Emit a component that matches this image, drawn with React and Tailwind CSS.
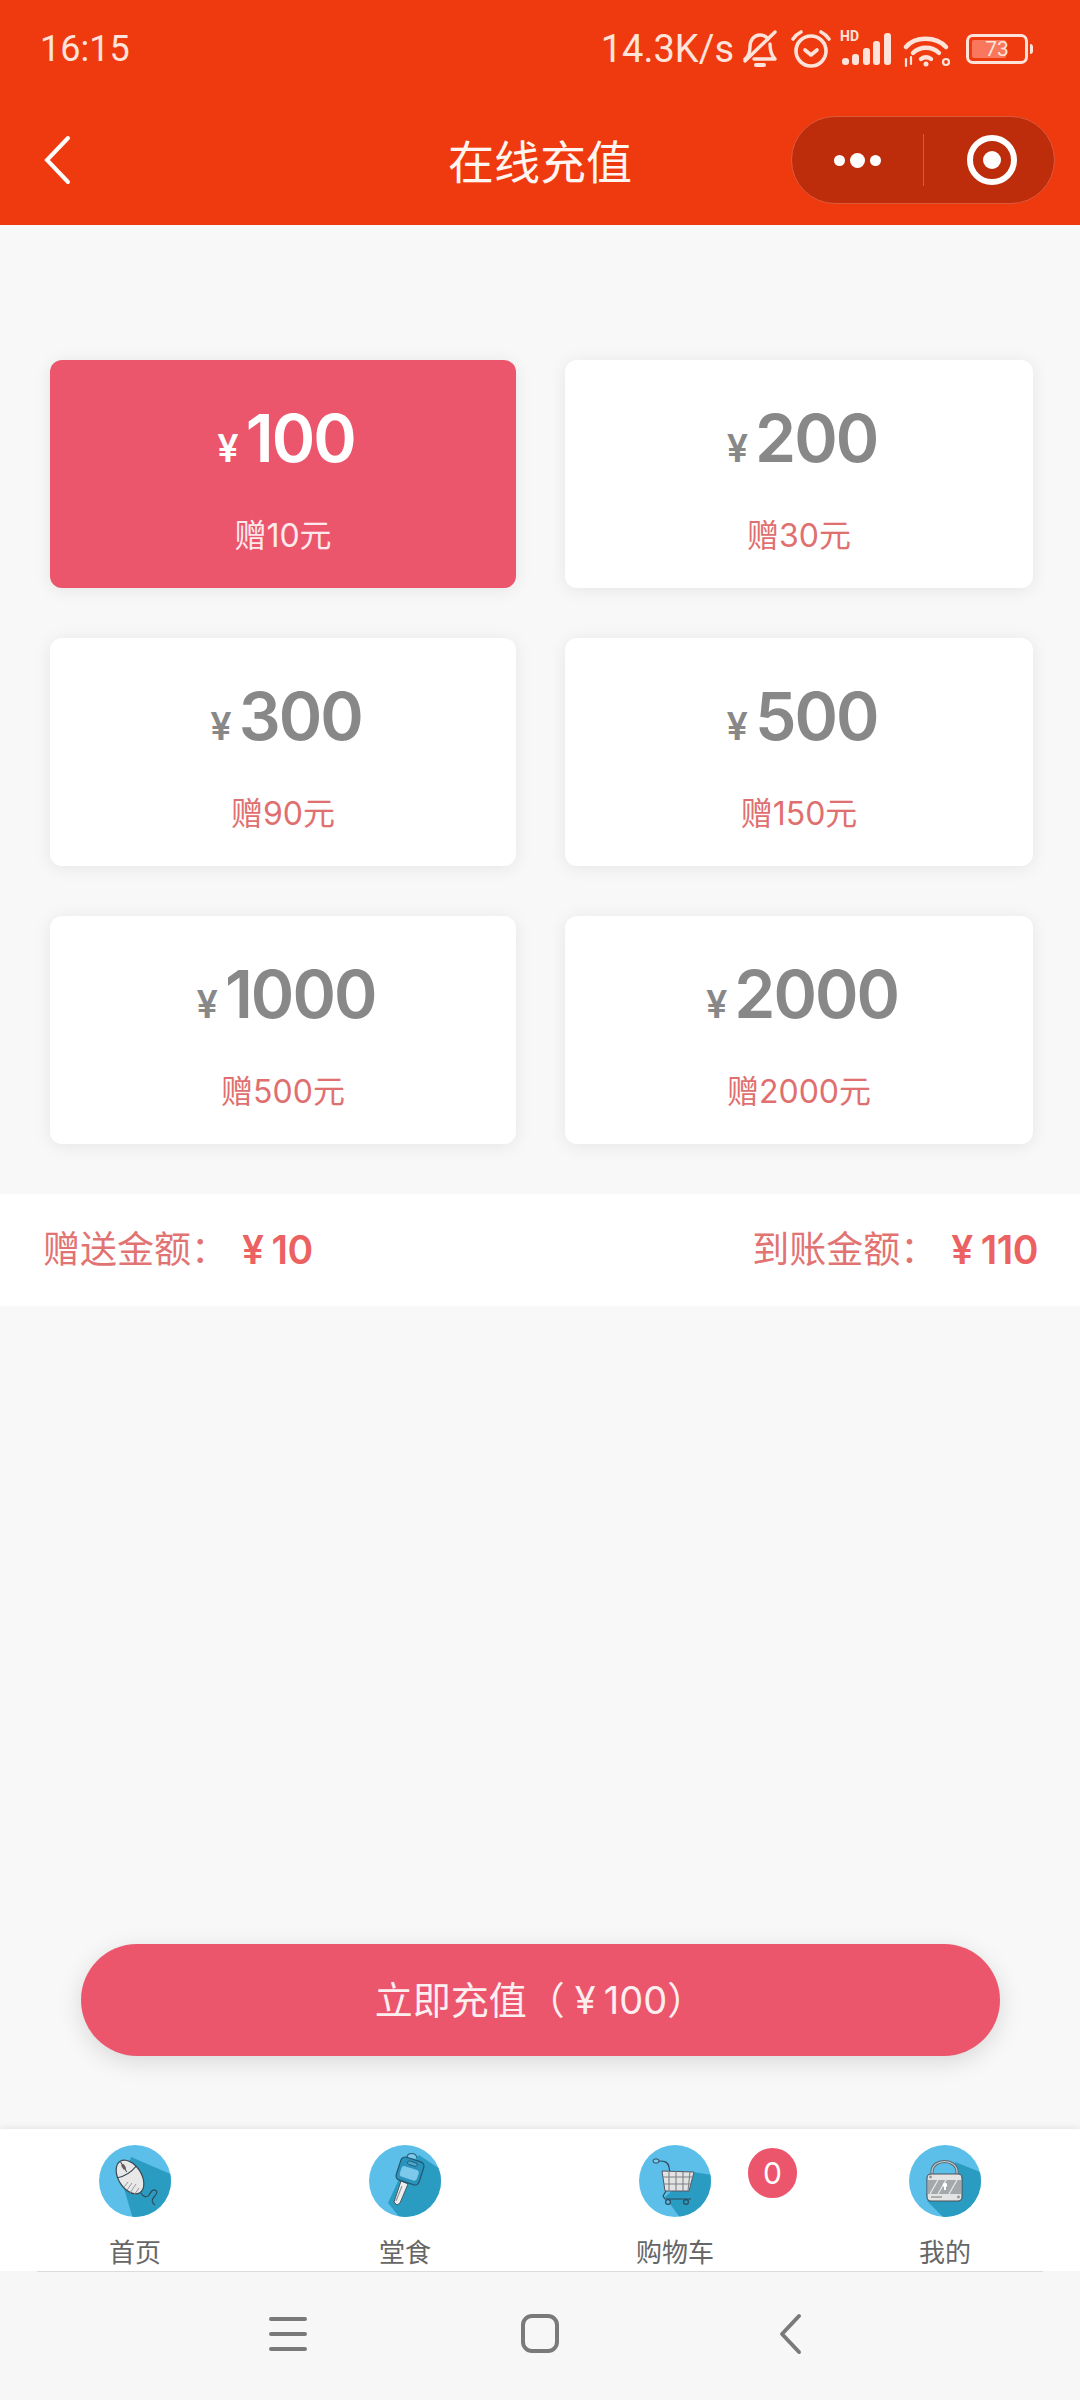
import React from 'react';

const plans = [
  { amount: '100', gift: '赠10元', active: true },
  { amount: '200', gift: '赠30元' },
  { amount: '300', gift: '赠90元' },
  { amount: '500', gift: '赠150元' },
  { amount: '1000', gift: '赠500元' },
  { amount: '2000', gift: '赠2000元' },
];

const StatusIcons = () => (
  <div className="flex items-center">
    {/* muted bell */}
    <svg width="36" height="40" viewBox="0 0 36 40" fill="none" stroke="#fde3da" strokeWidth="3.4" strokeLinecap="round" strokeLinejoin="round" className="ml-[8px]">
      <path d="M3 30c4-3 5-7 5-12 0-7 4-12 10-12 3 0 6 1 8 4" />
      <path d="M28 15c0 6 1 11 5 15H12" />
      <path d="M3 32 33 3" />
      <path d="M14 36h8" strokeWidth="4" />
    </svg>
    {/* alarm */}
    <svg width="42" height="40" viewBox="0 0 42 40" fill="none" stroke="#fde3da" strokeWidth="3.6" strokeLinecap="round" strokeLinejoin="round" className="ml-[12px]">
      <circle cx="21" cy="22" r="15" />
      <path d="M15 21l6 5 6-5" />
      <path d="M3 10c2-3 4-5 8-7M39 10c-2-3-4-5-8-7" />
    </svg>
    {/* HD signal */}
    <div className="relative ml-[8px] h-[34px] w-[52px]">
      <span className="absolute left-0 top-[-4px] font-['Roboto',sans-serif] text-[14px] font-bold leading-[16px] text-[#fde3da]">HD</span>
      <svg width="52" height="34" viewBox="0 0 52 34" fill="#fde3da" className="absolute left-0 top-0">
        <rect x="2" y="26" width="7" height="7" rx="3" />
        <rect x="12" y="22" width="7" height="11" rx="3" />
        <rect x="23" y="16" width="7" height="17" rx="3" />
        <rect x="33" y="9" width="7" height="24" rx="3" />
        <rect x="44" y="1" width="7" height="32" rx="3" />
      </svg>
    </div>
    {/* wifi */}
    <svg width="48" height="34" viewBox="0 0 48 34" fill="none" stroke="#fde3da" strokeLinecap="round" className="ml-[11px] mt-[4px]">
      <path d="M3 13C12 2 33 2 43 13" strokeWidth="4.4" />
      <path d="M10 19c7-7 19-7 26 0" strokeWidth="4.4" />
      <path d="M18 25c3-2 7-2 10 0" strokeWidth="4.4" />
      <circle cx="23" cy="30" r="1.5" fill="#fde3da" strokeWidth="2" />
      <path d="M3 25v7M8 23v7" strokeWidth="2.2" />
      <circle cx="43" cy="28" r="3" strokeWidth="2.2" />
    </svg>
    {/* battery */}
    <div className="ml-[15px] flex items-center">
      <div className="relative h-[30px] w-[62px] rounded-[7px] border-[3px] border-[#fde3da] p-[3px]">
        <div className="h-full w-[68%] rounded-[2px] bg-[#f9775c]" />
        <span className="absolute inset-0 text-center font-['Roboto',sans-serif] text-[21px] leading-[24px] text-[#fde3da]">73</span>
      </div>
      <div className="ml-[2px] h-[10px] w-[3px] rounded-r bg-[#fde3da]" />
    </div>
  </div>
);

const MouseIcon = () => (
  <svg width="72" height="72" viewBox="0 0 72 72">
    <defs><clipPath id="c1"><circle cx="36" cy="36" r="36" /></clipPath></defs>
    <circle cx="36" cy="36" r="36" fill="#5bbfe9" />
    <polygon points="32,12 74,30 74,74 34,74 24,40" fill="#2a9bc1" clipPath="url(#c1)" />
    <g transform="rotate(-32 31 32)">
      <ellipse cx="31" cy="32" rx="11.5" ry="18.5" fill="#e8e8e8" stroke="#3c4a54" strokeWidth="1.2" />
      <path d="M20 26c7 2.5 15 2.5 22 0" fill="none" stroke="#3c4a54" strokeWidth="1" />
      <path d="M31 14v12" stroke="#3c4a54" strokeWidth="1" />
      <rect x="29.4" y="17" width="3.2" height="6" rx="1.6" fill="#6b5a5a" />
    </g>
    <path d="M29 37l-4 5M33 38l-5 7M37 39l-6 9M40 43l-5 7" stroke="#8a8f92" strokeWidth="0.9" />
    <path d="M42 48c2 4 6 5 8 2s3-6 6-5 2 4-1 7-2 6 1 8" fill="none" stroke="#2e4a5a" strokeWidth="1.1" />
  </svg>
);

const KeyIcon = () => (
  <svg width="72" height="72" viewBox="0 0 72 72">
    <defs><clipPath id="c2"><circle cx="36" cy="36" r="36" /></clipPath></defs>
    <circle cx="36" cy="36" r="36" fill="#5bbfe9" />
    <polygon points="50,10 74,26 74,74 32,74 19,58 30,34" fill="#2a9bc1" clipPath="url(#c2)" />
    <path d="M38 13c0-6 9-6 10 0" fill="#7cc9ec" stroke="#2d5f78" strokeWidth="1.1" />
    <path d="M32 36l7 3-8 19-3 2-3-3z" fill="#eeeeee" stroke="#4a5a63" strokeWidth="1" />
    <path d="M33 41l-6 15" stroke="#8f9a9f" strokeWidth="1.2" />
    <g transform="rotate(18 41 26)">
      <rect x="29" y="14" width="24" height="24" rx="4.5" fill="#2a93bb" stroke="#24536b" strokeWidth="1.2" />
      <rect x="32" y="23" width="18" height="11" rx="3" fill="#7cc9ec" />
      <rect x="36" y="16.5" width="10" height="3.6" rx="1.8" fill="#4aa9cd" stroke="#24536b" strokeWidth="0.8" />
    </g>
  </svg>
);

const CartIcon = () => (
  <svg width="72" height="72" viewBox="0 0 72 72">
    <defs><clipPath id="c3"><circle cx="36" cy="36" r="36" /></clipPath></defs>
    <circle cx="36" cy="36" r="36" fill="#5bbfe9" />
    <polygon points="54,27 74,30 74,74 42,74 26,52" fill="#2a9bc1" clipPath="url(#c3)" />
    <path d="M15 16h5c6 0 9 1 10 6l1 6" fill="none" stroke="#2f4a5c" strokeWidth="1.2" />
    <rect x="14" y="14" width="6" height="4" rx="2" fill="#7cc9ec" stroke="#2f4a5c" strokeWidth="1" />
    <polygon points="23,26 55,27 50,46 26,46" fill="#e3e3e3" stroke="#556" strokeWidth="1" />
    <path d="M30 26v20M37 26v20M44 27v19M51 27l-2 19M24 32h30M25 39h27" stroke="#7c8186" strokeWidth="1.1" />
    <path d="M27 46l-3 5 2 3h26" fill="none" stroke="#2f4a5c" strokeWidth="1.2" />
    <circle cx="29" cy="57" r="2.4" fill="#5bbfe9" stroke="#2f4a5c" strokeWidth="1.2" />
    <circle cx="47" cy="57" r="2.4" fill="#2a9bc1" stroke="#2f4a5c" strokeWidth="1.2" />
  </svg>
);

const LockIcon = () => (
  <svg width="72" height="72" viewBox="0 0 72 72">
    <defs><clipPath id="c4"><circle cx="36" cy="36" r="36" /></clipPath></defs>
    <circle cx="36" cy="36" r="36" fill="#5bbfe9" />
    <polygon points="46,17 74,28 74,74 36,74 18,56 53,40" fill="#2a9bc1" clipPath="url(#c4)" />
    <path d="M23 30v-3c0-14 25-14 25 0v3" fill="none" stroke="#5c6b74" strokeWidth="3.2" />
    <path d="M23 30v-3c0-14 25-14 25 0v3" fill="none" stroke="#c9ced1" strokeWidth="1.2" />
    <rect x="18" y="29" width="35" height="27" rx="4" fill="#e4e4e4" stroke="#4a5258" strokeWidth="1.1" />
    <rect x="19" y="35" width="33" height="14" fill="#a4a8aa" />
    <path d="M21 49l8-14M29 49l8-14M40 49l8-14" stroke="#e4e4e4" strokeWidth="1.4" />
    <circle cx="36" cy="40" r="2.2" fill="#fff" />
    <rect x="35" y="40" width="2" height="5" fill="#fff" />
    <circle cx="21.5" cy="32" r="1.4" fill="#8e9498" />
    <circle cx="49.5" cy="52" r="1.4" fill="#8e9498" />
    <path d="M22 52h11" stroke="#777" strokeWidth="1" />
  </svg>
);

const tabs = [
  { label: '首页', Icon: MouseIcon },
  { label: '堂食', Icon: KeyIcon },
  { label: '购物车', Icon: CartIcon, badge: '0' },
  { label: '我的', Icon: LockIcon },
];

const cjk = "font-['Noto_Sans_CJK_SC',sans-serif]";

export default function App() {
  return (
    <div className={`flex h-[2400px] w-[1080px] flex-col overflow-hidden bg-[#f8f8f8] font-['Inter','Noto_Sans_CJK_SC',sans-serif]`}>
      {/* header */}
      <div className="h-[225px] shrink-0 bg-[#ef3a0f]">
        <div className="flex h-[96px] items-center justify-between pl-[40px] pr-[47px] pt-[2px] text-[#fde3da]">
          <span className="font-['Roboto',sans-serif] text-[36px]">16:15</span>
          <div className="flex items-center">
            <span className="font-['Roboto',sans-serif] text-[38px] leading-none">14.3K/s</span>
            <StatusIcons />
          </div>
        </div>
        <div className="relative flex h-[128px] items-center justify-center">
          <svg width="30" height="50" viewBox="0 0 30 50" fill="none" stroke="#fff" strokeWidth="4" strokeLinecap="round" className="absolute left-[43px] top-[39px]">
            <path d="M25 3 4 25l21 22" />
          </svg>
          <span className={`${cjk} mb-[2px] text-[46px] leading-none text-[#fff5f1]`}>在线充值</span>
          <div className="absolute right-[25px] top-[20px] flex h-[88px] w-[264px] items-center rounded-full border border-[#e0583a] bg-[#bd2d0c]">
            <div className="flex w-[131px] items-center justify-center gap-[5px]">
              <span className="h-[11px] w-[11px] rounded-full bg-white" />
              <span className="h-[15px] w-[15px] rounded-full bg-white" />
              <span className="h-[11px] w-[11px] rounded-full bg-white" />
            </div>
            <div className="h-[52px] w-px bg-[#d8593a]" />
            <div className="flex flex-1 items-center justify-center pl-[5px]">
              <div className="flex h-[50px] w-[50px] items-center justify-center rounded-full border-[6px] border-white">
                <span className="h-[18px] w-[18px] rounded-full bg-white" />
              </div>
            </div>
          </div>
        </div>
      </div>

      {/* amount cards */}
      <div className="grid grid-cols-[466px_468px] gap-x-[49px] gap-y-[50px] pl-[50px] pt-[135px]">
        {plans.map((plan) => (
          <div
            key={plan.amount}
            className={`flex h-[228px] flex-col items-center rounded-[12px] pt-[38px] shadow-[0_2px_18px_rgba(0,0,0,0.08)] ${plan.active ? 'bg-[#eb566d]' : 'bg-white'}`}
          >
            <div className={`flex h-[80px] items-baseline pl-[6px] font-semibold leading-[80px] ${plan.active ? 'text-white' : 'text-[#888888]'}`}>
              <span className="mr-[7px] text-[38px]">¥</span>
              <span className="text-[66px] tracking-[-2px]">{plan.amount}</span>
            </div>
            <div className={`mt-[38px] text-[32px] leading-[40px] ${plan.active ? 'text-[#fde9ec]' : 'text-[#e0706f]'}`}>{plan.gift}</div>
          </div>
        ))}
      </div>

      {/* summary */}
      <div className="mt-[50px] flex h-[112px] shrink-0 items-center justify-between bg-white pl-[43px] pr-[42px] text-[37px]">
        <div className="flex items-center">
          <span className="text-[#e27373]">赠送金额：</span>
          <span className="ml-[14px] flex text-[39px] font-semibold tracking-[-0.5px] text-[#ec6161]">
            <span className="mr-[8px]">¥</span>10
          </span>
        </div>
        <div className="flex items-center">
          <span className="text-[#e27373]">到账金额：</span>
          <span className="ml-[14px] flex text-[39px] font-semibold tracking-[-0.5px] text-[#ec6161]">
            <span className="mr-[8px]">¥</span>110
          </span>
        </div>
      </div>

      {/* submit */}
      <button className="mx-auto mt-[638px] flex h-[112px] w-[919px] shrink-0 items-center justify-center rounded-full bg-[#eb566d] text-[38px] text-[#fdeef0] shadow-[0_6px_24px_rgba(0,0,0,0.13)]">
        立即充值（<span className="ml-[10px] mr-[8px]">¥</span>100）
      </button>

      {/* tab bar */}
      <div className="mt-[73px] grid h-[142px] shrink-0 grid-cols-4 bg-white shadow-[0_-2px_6px_rgba(0,0,0,0.07)]">
        {tabs.map(({ label, Icon, badge }) => (
          <div key={label} className="relative flex flex-col items-center pt-[16px]">
            <Icon />
            <span className="mt-[19px] text-[26px] leading-[34px] text-[#666666]">{label}</span>
            {badge && (
              <span className="absolute left-[208px] top-[19px] flex h-[50px] w-[49px] items-center justify-center rounded-full bg-[#eb566d] text-[30px] text-white">
                {badge}
              </span>
            )}
          </div>
        ))}
      </div>

      {/* android nav bar */}
      <div className="relative flex-1 bg-[#f7f7f7]">
        <div className="ml-[37px] h-px w-[1006px] bg-[#dcdcdc]" />
        <div className="flex h-[123px] items-center justify-center">
          <svg width="560" height="44" viewBox="0 0 560 44" fill="none" stroke="#7a7a7a" strokeWidth="4" strokeLinecap="round" strokeLinejoin="round" className="ml-[18px]">
            <path d="M2 7h34M2 22h34M2 37h34" />
            <rect x="254" y="4" width="34" height="35" rx="9" />
            <path d="M530 4 513 22l17 18" />
          </svg>
        </div>
      </div>
    </div>
  );
}
